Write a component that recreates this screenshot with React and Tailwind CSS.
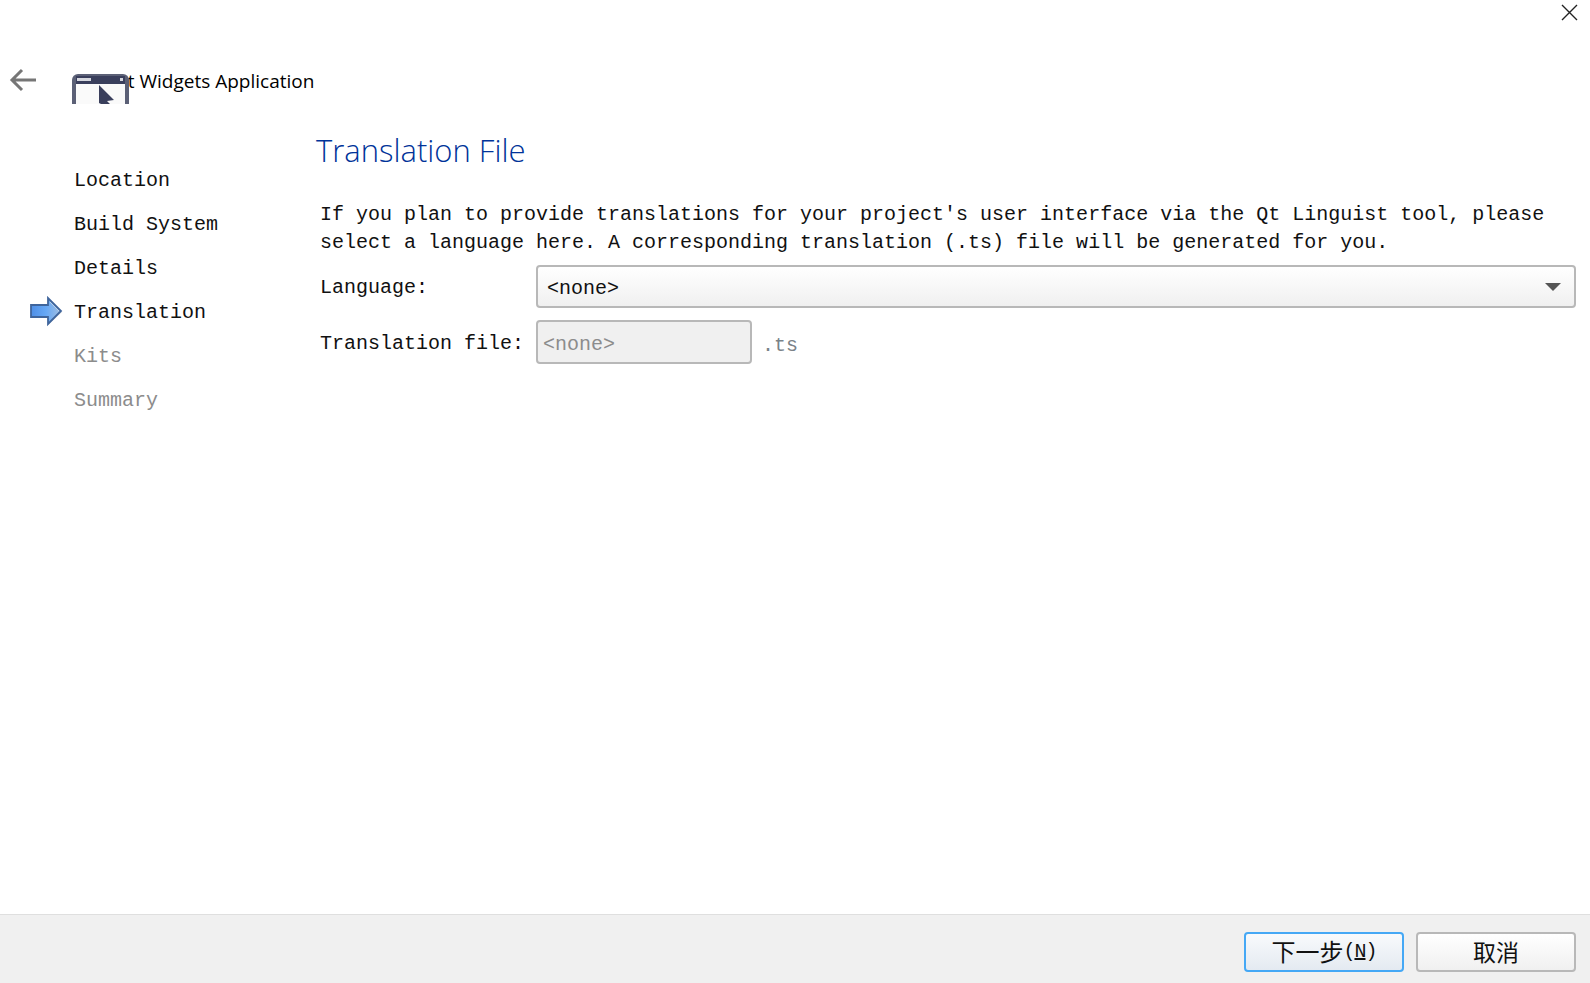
const steps = [
  { name: 'Location', done: true },
  { name: 'Build System', done: true },
  { name: 'Details', done: true },
  { name: 'Translation', done: true, current: true },
  { name: 'Kits' },
  { name: 'Summary' },
];

function CurrentArrow() {
  return (
    <svg width="34" height="32" viewBox="0 0 34 32" className="shrink-0">
      <defs>
        <linearGradient id="arrowFill" x1="0" y1="0" x2="1" y2="0">
          <stop offset="0" stopColor="#4f8fe6" />
          <stop offset="0.5" stopColor="#66a8f5" />
          <stop offset="1" stopColor="#a3bfe0" />
        </linearGradient>
      </defs>
      <path d="M2 22h16v7l14-13-2-1-12 12v-5z" fill="#c4c4c4" opacity="0.7" />
      <path d="M1 9h17V2l13 13-13 13v-7H1z" fill="url(#arrowFill)" stroke="#3f659c" strokeWidth="1.8" />
      <path d="M20 6l9 9" stroke="#b9d0ea" strokeWidth="1" fill="none" />
    </svg>
  );
}

function WidgetIcon() {
  return (
    <svg width="58" height="31" viewBox="0 0 58 31" className="shrink-0 relative">
      <path d="M0 31V7a6 6 0 0 1 6-6h45a6 6 0 0 1 6 6v24z" fill="#5b6076" />
      <path d="M4 3h49v8H4z" fill="#3a3f5c" />
      <rect x="5" y="5" width="14" height="3" fill="#d6d8df" />
      <rect x="48" y="5" width="3" height="3" fill="#d6d8df" />
      <rect x="4" y="11" width="49" height="20" fill="#fafafa" />
      <path d="M27 12l15 15-7 1 3 3H29l-2-1z" fill="#3a3f5c" />
    </svg>
  );
}

export default function App() {
  return (
    <div className="h-[983px] w-full flex flex-col bg-white overflow-hidden font-['Liberation_Mono','Noto_Sans_CJK_SC',monospace] text-[20px] text-[#111]">
      <div className="h-[27px] flex justify-end pr-[12px] pt-[4px]">
        <svg width="17" height="17" viewBox="0 0 17 17" fill="none" stroke="#222" strokeWidth="1.4">
          <path d="M1 1l15 15M16 1L1 16" />
        </svg>
      </div>

      <div className="h-[77px] flex items-start pl-[9px] pt-[38px]">
        <svg width="28" height="24" viewBox="0 0 28 24" fill="none" stroke="#767676" strokeWidth="3" className="mt-[3px]">
          <path d="M27 12H4M13 2L3 12l10 10" />
        </svg>
        <div className="relative ml-[35px] h-[31px] mt-[8px]">
          <WidgetIcon />
        </div>
        <span className="ml-[-17px] mt-[3px] font-['Open_Sans',sans-serif] text-[19px] leading-[26px] text-black">
          Qt Widgets Application
        </span>
      </div>

      <div className="flex-1 flex">
        <div className="w-[316px] pt-[55px] pl-[30px]">
          {steps.map((s) => (
            <div key={s.name} className="h-[44px] flex items-center">
              <div className="w-[44px] shrink-0 mt-[-2px]">{s.current && <CurrentArrow />}</div>
              <span className={s.done ? 'text-[#111]' : 'text-[#8c8c8c]'}>{s.name}</span>
            </div>
          ))}
        </div>

        <div className="flex-1 pr-[14px]">
          <h1 className="h-[40px] mt-[26px] font-['Open_Sans',sans-serif] font-light text-[31px] leading-[40px] text-[#003399]">
            Translation File
          </h1>
          <p className="mt-[31px] pl-[4px] leading-[28px] whitespace-pre text-[#111]">
            If you plan to provide translations for your project's user interface via the Qt Linguist tool, please
            <br />
            select a language here. A corresponding translation (.ts) file will be generated for you.
          </p>
          <div className="mt-[8px] flex items-center h-[43px]">
            <label className="w-[220px] pl-[4px] pt-[3px]">Language:</label>
            <div className="flex-1 h-[43px] rounded-[4px] border-2 border-[#b8b8b8] bg-gradient-to-b from-white to-[#f0f0f0] flex items-center pl-[9px] pr-[13px] justify-between">
              <span className="pt-[4px]">&lt;none&gt;</span>
              <span className="w-0 h-0 border-l-[8px] border-r-[8px] border-t-[8px] border-l-transparent border-r-transparent border-t-[#555]" />
            </div>
          </div>
          <div className="mt-[12px] flex items-center h-[44px]">
            <label className="w-[220px] pl-[4px] pt-[3px]">Translation file:</label>
            <div className="w-[216px] h-[44px] rounded-[4px] border-2 border-[#b8b8b8] bg-[#f0f0f0] flex items-center pl-[5px] pt-[6px] text-[#8c8c8c]">
              &lt;none&gt;
            </div>
            <span className="ml-[10px] pt-[7px] text-[#7a8288]">.ts</span>
          </div>
        </div>
      </div>

      <div className="h-[69px] bg-[#f0f0f0] border-t border-[#dfdfdf] flex items-start justify-end gap-[12px] pt-[17px] pr-[14px]">
        <button className="w-[160px] h-[40px] rounded-[4px] border-2 border-[#45a8f5] bg-gradient-to-b from-[#f8fafc] to-[#e4eaf1] flex items-center justify-center">
          <span className="font-['Noto_Sans_CJK_SC',sans-serif] text-[24px] leading-none mt-[-2px]">下一步</span>
          <span className="tracking-[-1px]">(<span className="underline">N</span>)</span>
        </button>
        <button className="w-[160px] h-[40px] rounded-[4px] border-2 border-[#b8b8b8] bg-gradient-to-b from-white to-[#f0f0f0] flex items-center justify-center">
          <span className="font-['Noto_Sans_CJK_SC',sans-serif] text-[23px] leading-none mt-[-2px]">取消</span>
        </button>
      </div>
    </div>
  );
}
